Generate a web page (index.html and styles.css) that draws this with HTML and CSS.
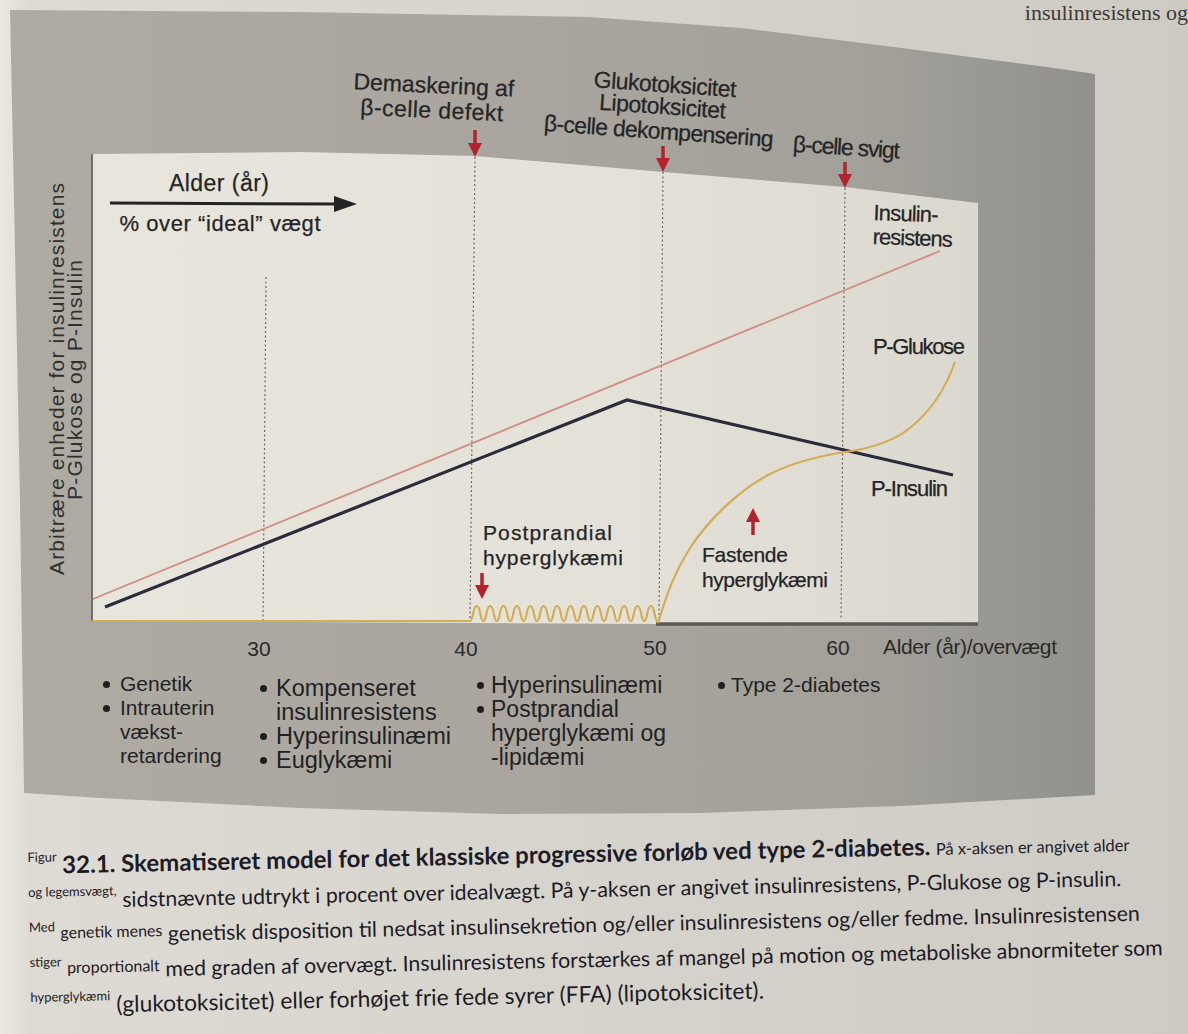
FILE: index.html
```html
<!DOCTYPE html>
<html lang="da">
<head>
<meta charset="utf-8">
<title>Figur 32.1 – type 2-diabetes</title>
<link rel="stylesheet" href="styles.css">
</head>
<body>
<div class="page">
  <div class="running-head">insulinresistens og</div>

  <figure class="figure">
    <svg class="chart" viewBox="10 10 1085 660" width="1085" height="660" role="img" aria-label="Skematiseret model for forløb ved type 2-diabetes">
      <defs>
        <linearGradient id="paper" x1="0" y1="0" x2="1" y2="0">
          <stop offset="0" stop-color="#e8e5dd"/>
          <stop offset="0.6" stop-color="#e4e1d9"/>
          <stop offset="1" stop-color="#dbd8d0"/>
        </linearGradient>
      </defs>

      <polygon class="plot" points="92,154 300,152 475,156 663,172 845,187 978,203 978,624 660,624 92,621"/>
      <line class="axis" x1="92" y1="154" x2="92" y2="621"/>
      <line class="axis-x" x1="656" y1="624" x2="978" y2="624"/>

      <g class="grid">
        <line x1="266" y1="277" x2="263" y2="620"/>
        <line x1="475" y1="157" x2="470" y2="620"/>
        <line x1="663" y1="172" x2="659" y2="622"/>
        <line x1="845" y1="188" x2="841" y2="620"/>
      </g>

      <line class="resist" x1="93" y1="599" x2="940" y2="251"/>
      <polyline class="insulin" points="105,607 627,400 953,475"/>
      <path class="glucose" d="M92,621 H470 c3.5,0 2.5,-15 6.7,-15 c4.2,0 3.2,15 6.7,15 c3.5,0 2.5,-15 6.7,-15 c4.2,0 3.2,15 6.7,15 c3.5,0 2.5,-15 6.7,-15 c4.2,0 3.2,15 6.7,15 c3.5,0 2.5,-15 6.7,-15 c4.2,0 3.2,15 6.7,15 c3.5,0 2.5,-15 6.7,-15 c4.2,0 3.2,15 6.7,15 c3.5,0 2.5,-15 6.7,-15 c4.2,0 3.2,15 6.7,15 c3.5,0 2.5,-15 6.7,-15 c4.2,0 3.2,15 6.7,15 c3.5,0 2.5,-15 6.7,-15 c4.2,0 3.2,15 6.7,15 c3.5,0 2.5,-15 6.7,-15 c4.2,0 3.2,15 6.7,15 c3.5,0 2.5,-15 6.7,-15 c4.2,0 3.2,15 6.7,15 c3.5,0 2.5,-15 6.7,-15 c4.2,0 3.2,15 6.7,15 c3.5,0 2.5,-15 6.7,-15 c4.2,0 3.2,15 6.7,15 c3.5,0 2.5,-15 6.7,-15 c4.2,0 3.2,15 6.7,15 c3.5,0 2.5,-15 6.7,-15 c4.2,0 3.2,15 6.7,15"/>
      <path class="glucose" d="M658,623 C668,590 676,570 690,548 C705,525 735,492 770,474 C800,459 830,454 852,451 C875,447 895,440 910,428 C930,412 945,390 955,362"/>

      <g class="red">
        <line x1="475" y1="130" x2="475" y2="146"/><polygon points="468,143 482,143 475,157"/>
        <line x1="663" y1="146" x2="663" y2="161"/><polygon points="656,158 670,158 663,172"/>
        <line x1="845" y1="162" x2="845" y2="177"/><polygon points="838,174 852,174 845,188"/>
        <line x1="482" y1="573" x2="482" y2="588"/><polygon points="475,585 489,585 482,599"/>
        <line x1="753" y1="519" x2="753" y2="535"/><polygon points="746,522 760,522 753,508"/>
      </g>

      <line class="age-arrow" x1="110" y1="203" x2="340" y2="204"/>
      <polygon class="age-head" points="334,196 357,204 334,212"/>

      <text class="lbl top" text-anchor="middle" transform="rotate(2.6 433 105)"><tspan x="433" y="93" textLength="161">Demaskering af</tspan><tspan x="432" y="118" textLength="143">β-celle defekt</tspan></text>
      <text class="lbl top" text-anchor="middle" transform="rotate(4 661 115)"><tspan x="663" y="92" textLength="143">Glukotoksicitet</tspan><tspan x="662" y="114" textLength="127">Lipotoksicitet</tspan><tspan x="660" y="139" textLength="230">β-celle dekompensering</tspan></text>
      <text class="lbl top" x="846" y="155" text-anchor="middle" textLength="107" transform="rotate(3.5 846 155)">β-celle svigt</text>

      <text class="lbl big" x="219" y="191" text-anchor="middle" textLength="100">Alder (år)</text>
      <text class="lbl" x="220" y="231" text-anchor="middle" textLength="201">% over “ideal” vægt</text>

      <text class="lbl" transform="rotate(2 873 230)"><tspan x="873" y="220" textLength="65">Insulin-</tspan><tspan x="873" y="244" textLength="80">resistens</tspan></text>
      <text class="lbl" x="873" y="354" textLength="92">P-Glukose</text>
      <text class="lbl" x="871" y="496" textLength="77">P-Insulin</text>

      <text class="lbl pair"><tspan x="483" y="540" textLength="129">Postprandial</tspan><tspan x="483" y="565" textLength="140">hyperglykæmi</tspan></text>
      <text class="lbl pair"><tspan x="702" y="562" textLength="86">Fastende</tspan><tspan x="702" y="587" textLength="126">hyperglykæmi</tspan></text>

      <text class="ylab" transform="translate(64 379) rotate(-90)" text-anchor="middle"><tspan x="0" y="0" textLength="392">Arbitrære enheder for insulinresistens</tspan><tspan x="-1" y="18" textLength="240">P-Glukose og P-Insulin</tspan></text>

      <text class="tick" x="259" y="656" text-anchor="middle">30</text>
      <text class="tick" x="466" y="656" text-anchor="middle">40</text>
      <text class="tick" x="655" y="655" text-anchor="middle">50</text>
      <text class="tick" x="838" y="655" text-anchor="middle">60</text>
      <text class="tick" x="883" y="654" textLength="174">Alder (år)/overvægt</text>
    </svg>

    <div class="notes">
      <ul class="col col1">
        <li><span class="dot"></span><span>Genetik</span></li>
        <li><span class="dot"></span><span>Intrauterin<br>vækst-<br>retardering</span></li>
      </ul>
      <ul class="col col2">
        <li><span class="dot"></span><span>Kompenseret<br>insulinresistens</span></li>
        <li><span class="dot"></span><span>Hyperinsulinæmi</span></li>
        <li><span class="dot"></span><span>Euglykæmi</span></li>
      </ul>
      <ul class="col col3">
        <li><span class="dot"></span><span>Hyperinsulinæmi</span></li>
        <li><span class="dot"></span><span>Postprandial<br>hyperglykæmi og<br>-lipidæmi</span></li>
      </ul>
      <ul class="col col4">
        <li><span class="dot"></span><span>Type 2-diabetes</span></li>
      </ul>
    </div>
  </figure>

  <p class="caption">
    <span class="line"><span class="curl">Figur</span> <b class="title">32.1. Skematiseret model for det klassiske progressive forløb ved type 2-diabetes.</b> <span class="tail">På x-aksen er angivet alder</span></span>
    <span class="line"><span class="curl">og legemsvægt,</span> sidstnævnte udtrykt i procent over idealvægt. På y-aksen er angivet insulinresistens, P-Glukose og P-insulin.</span>
    <span class="line"><span class="curl">Med</span> <span class="curl2">genetik menes</span> genetisk disposition til nedsat insulinsekretion og/eller insulinresistens og/eller fedme. Insulinresistensen</span>
    <span class="line"><span class="curl">stiger</span> <span class="curl2">proportionalt</span> med graden af overvægt. Insulinresistens forstærkes af mangel på motion og metaboliske abnormiteter som</span>
    <span class="line last"><span class="curl">hyperglykæmi</span> (glukotoksicitet) eller forhøjet frie fede syrer (FFA) (lipotoksicitet).</span>
  </p>
</div>
</body>
</html>
```

FILE: styles.css
```css
html, body {
  margin: 0;
  padding: 0;
  overflow: hidden;
}

body {
  width: 1188px;
  height: 1034px;
  background: linear-gradient(90deg, #ebe8e1 0, #dedbd4 2.5%, #d8d5ce 40%, #cecbc5 100%);
  font-family: "Liberation Sans", Arial, sans-serif;
  color: #262626;
}

.page {
  width: 1188px;
  height: 1034px;
}

.running-head {
  height: 7px;
  margin-top: 3px;
  text-align: right;
  white-space: nowrap;
  font-family: "Liberation Serif", "Times New Roman", serif;
  font-size: 22px;
  line-height: 20px;
  color: #3d3a36;
}

.figure {
  margin: 0 0 0 10px;
  width: 1085px;
  height: 805px;
  background: linear-gradient(90deg, #afaba3 0%, #aaa69f 45%, #a3a09a 80%, #9a9893 90%, #93918d 100%);
  clip-path: polygon(0 0, 290px 2px, 578px 7px, 731px 18px, 884px 37px, 1037px 57px, 1085px 64px,
    1085px 785px, 890px 796px, 690px 803px, 490px 804px, 290px 798px, 90px 788px, 14px 783px,
    10px 490px, 4px 190px);
}

.chart {
  display: block;
  width: 1085px;
  height: 660px;
}

.plot { fill: url(#paper); }
.axis { stroke: #6f6d69; stroke-width: 2; }
.axis-x { stroke: #5c5a57; stroke-width: 3.5; }

.grid line {
  stroke: #6c6a66;
  stroke-width: 1.2;
  stroke-dasharray: 2 2.5;
}

.resist {
  stroke: #cf8c82;
  stroke-width: 1.8;
}

.insulin {
  fill: none;
  stroke: #2c2b3b;
  stroke-width: 3.2;
  stroke-linejoin: miter;
}

.glucose {
  fill: none;
  stroke: #d3ad55;
  stroke-width: 2.2;
}

.red line { stroke: #b2232e; stroke-width: 3.5; }
.red polygon { fill: #b2232e; }

.age-arrow { stroke: #232323; stroke-width: 3; }
.age-head { fill: #232323; }

.lbl {
  font-family: "Liberation Sans", Arial, sans-serif;
  font-size: 22px;
  fill: #252525;
  stroke: #252525;
  stroke-width: 0.25;
}

.lbl.top { font-size: 23px; }
.lbl.big { font-size: 23px; }
.lbl.pair { font-size: 21px; }

.ylab {
  font-family: "Liberation Sans", Arial, sans-serif;
  font-size: 21px;
  fill: #303030;
}

.tick {
  font-family: "Liberation Sans", Arial, sans-serif;
  font-size: 21px;
  fill: #2a2a2a;
}

.notes {
  margin-top: 2px;
  padding-left: 93px;
  display: grid;
  grid-template-columns: 157px 217px 241px auto;
}

.col {
  margin: 0;
  padding: 0;
  list-style: none;
  line-height: 24px;
  color: #222;
}

.col li {
  display: flex;
  align-items: flex-start;
  gap: 8px;
}

.dot {
  flex: none;
  width: 7px;
  height: 7px;
  border-radius: 50%;
  background: #1e1e1e;
  margin-top: 9px;
}

.col1 { font-size: 21px; }
.col1 li { gap: 10px; }
.col2 { font-size: 23.5px; padding-top: 4px; }
.col2 li { gap: 9px; }
.col3 { font-size: 23px; padding-top: 1px; }
.col3 li { gap: 7px; }
.col4 { font-size: 21px; padding-top: 1px; }
.col4 li { gap: 6px; }

.caption {
  margin: 25px 0 0;
  padding-left: 27px;
  font-family: Lato, "Open Sans", sans-serif;
  font-size: 21.3px;
  color: #1d1b25;
  transform: rotate(-1.2deg);
  transform-origin: 27px 0;
}

.line {
  display: block;
  white-space: nowrap;
  height: 35px;
  line-height: 35px;
}

.line.last { font-size: 22.8px; }

.curl {
  font-size: 13px;
  vertical-align: 12px;
}

.curl2 {
  font-size: 16px;
  vertical-align: 5px;
}

.title {
  font-weight: 700;
  font-size: 24px;
}

.tail {
  font-size: 16.5px;
}
```
